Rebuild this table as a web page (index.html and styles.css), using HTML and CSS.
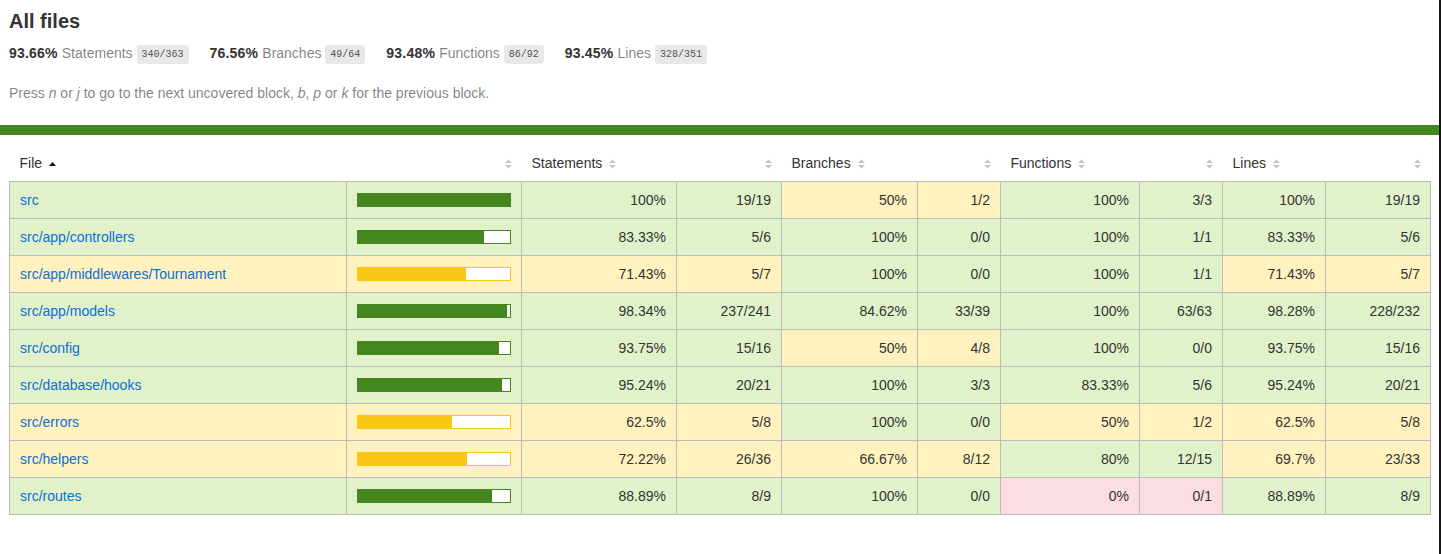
FILE: index.html
```html
<!DOCTYPE html>
<html lang="en">
<head>
<meta charset="utf-8">
<title>Code coverage report for All files</title>
<link rel="stylesheet" href="styles.css">
</head>
<body>
<div class="wrapper">
  <div class="pad1">
    <h1>All files</h1>
    <div class="clearfix">
      <div class="fl pad1y space-right2"><span class="strong">93.66% </span><span class="quiet">Statements</span> <span class="fraction">340/363</span></div>
      <div class="fl pad1y space-right2"><span class="strong">76.56% </span><span class="quiet">Branches</span> <span class="fraction">49/64</span></div>
      <div class="fl pad1y space-right2"><span class="strong">93.48% </span><span class="quiet">Functions</span> <span class="fraction">86/92</span></div>
      <div class="fl pad1y space-right2"><span class="strong">93.45% </span><span class="quiet">Lines</span> <span class="fraction">328/351</span></div>
    </div>
    <p class="quiet hint">Press <em>n</em> or <em>j</em> to go to the next uncovered block, <em>b</em>, <em>p</em> or <em>k</em> for the previous block.</p>
  </div>
  <div class="status-line high"></div>
  <div class="pad1">
    <table class="coverage-summary">
      <colgroup>
        <col class="c-file"><col class="c-pic"><col class="c-spct"><col class="c-sabs"><col class="c-bpct"><col class="c-babs"><col class="c-fpct"><col class="c-fabs"><col class="c-lpct"><col class="c-labs">
      </colgroup>
      <thead>
        <tr>
          <th class="file sorted">File<span class="sorter"><svg width="7" height="10" viewBox="0 0 7 10"><polygon points="3.5,3 7,7 0,7" fill="#111"/></svg></span></th>
          <th class="pic"><span class="sorter"><svg width="7" height="10" viewBox="0 0 7 10"><polygon points="3.5,0.5 7,4 0,4" fill="#c4c4c4"/><polygon points="0,6 7,6 3.5,9.5" fill="#c4c4c4"/></svg></span></th>
          <th class="pct">Statements<span class="sorter"><svg width="7" height="10" viewBox="0 0 7 10"><polygon points="3.5,0.5 7,4 0,4" fill="#c4c4c4"/><polygon points="0,6 7,6 3.5,9.5" fill="#c4c4c4"/></svg></span></th>
          <th class="abs"><span class="sorter"><svg width="7" height="10" viewBox="0 0 7 10"><polygon points="3.5,0.5 7,4 0,4" fill="#c4c4c4"/><polygon points="0,6 7,6 3.5,9.5" fill="#c4c4c4"/></svg></span></th>
          <th class="pct">Branches<span class="sorter"><svg width="7" height="10" viewBox="0 0 7 10"><polygon points="3.5,0.5 7,4 0,4" fill="#c4c4c4"/><polygon points="0,6 7,6 3.5,9.5" fill="#c4c4c4"/></svg></span></th>
          <th class="abs"><span class="sorter"><svg width="7" height="10" viewBox="0 0 7 10"><polygon points="3.5,0.5 7,4 0,4" fill="#c4c4c4"/><polygon points="0,6 7,6 3.5,9.5" fill="#c4c4c4"/></svg></span></th>
          <th class="pct">Functions<span class="sorter"><svg width="7" height="10" viewBox="0 0 7 10"><polygon points="3.5,0.5 7,4 0,4" fill="#c4c4c4"/><polygon points="0,6 7,6 3.5,9.5" fill="#c4c4c4"/></svg></span></th>
          <th class="abs"><span class="sorter"><svg width="7" height="10" viewBox="0 0 7 10"><polygon points="3.5,0.5 7,4 0,4" fill="#c4c4c4"/><polygon points="0,6 7,6 3.5,9.5" fill="#c4c4c4"/></svg></span></th>
          <th class="pct">Lines<span class="sorter"><svg width="7" height="10" viewBox="0 0 7 10"><polygon points="3.5,0.5 7,4 0,4" fill="#c4c4c4"/><polygon points="0,6 7,6 3.5,9.5" fill="#c4c4c4"/></svg></span></th>
          <th class="abs"><span class="sorter"><svg width="7" height="10" viewBox="0 0 7 10"><polygon points="3.5,0.5 7,4 0,4" fill="#c4c4c4"/><polygon points="0,6 7,6 3.5,9.5" fill="#c4c4c4"/></svg></span></th>
        </tr>
      </thead>
      <tbody>
        <tr>
          <td class="file high"><a href="#">src</a></td>
          <td class="pic high"><div class="chart"><div class="cover-fill cover-full" style="width: 100%"></div><div class="cover-empty" style="width: 0%"></div></div></td>
          <td class="pct high">100%</td><td class="abs high">19/19</td>
          <td class="pct medium">50%</td><td class="abs medium">1/2</td>
          <td class="pct high">100%</td><td class="abs high">3/3</td>
          <td class="pct high">100%</td><td class="abs high">19/19</td>
        </tr>
        <tr>
          <td class="file high"><a href="#">src/app/controllers</a></td>
          <td class="pic high"><div class="chart"><div class="cover-fill" style="width: 83%"></div><div class="cover-empty" style="width: 17%"></div></div></td>
          <td class="pct high">83.33%</td><td class="abs high">5/6</td>
          <td class="pct high">100%</td><td class="abs high">0/0</td>
          <td class="pct high">100%</td><td class="abs high">1/1</td>
          <td class="pct high">83.33%</td><td class="abs high">5/6</td>
        </tr>
        <tr>
          <td class="file medium"><a href="#">src/app/middlewares/Tournament</a></td>
          <td class="pic medium"><div class="chart"><div class="cover-fill" style="width: 71%"></div><div class="cover-empty" style="width: 29%"></div></div></td>
          <td class="pct medium">71.43%</td><td class="abs medium">5/7</td>
          <td class="pct high">100%</td><td class="abs high">0/0</td>
          <td class="pct high">100%</td><td class="abs high">1/1</td>
          <td class="pct medium">71.43%</td><td class="abs medium">5/7</td>
        </tr>
        <tr>
          <td class="file high"><a href="#">src/app/models</a></td>
          <td class="pic high"><div class="chart"><div class="cover-fill" style="width: 98%"></div><div class="cover-empty" style="width: 2%"></div></div></td>
          <td class="pct high">98.34%</td><td class="abs high">237/241</td>
          <td class="pct high">84.62%</td><td class="abs high">33/39</td>
          <td class="pct high">100%</td><td class="abs high">63/63</td>
          <td class="pct high">98.28%</td><td class="abs high">228/232</td>
        </tr>
        <tr>
          <td class="file high"><a href="#">src/config</a></td>
          <td class="pic high"><div class="chart"><div class="cover-fill" style="width: 93%"></div><div class="cover-empty" style="width: 7%"></div></div></td>
          <td class="pct high">93.75%</td><td class="abs high">15/16</td>
          <td class="pct medium">50%</td><td class="abs medium">4/8</td>
          <td class="pct high">100%</td><td class="abs high">0/0</td>
          <td class="pct high">93.75%</td><td class="abs high">15/16</td>
        </tr>
        <tr>
          <td class="file high"><a href="#">src/database/hooks</a></td>
          <td class="pic high"><div class="chart"><div class="cover-fill" style="width: 95%"></div><div class="cover-empty" style="width: 5%"></div></div></td>
          <td class="pct high">95.24%</td><td class="abs high">20/21</td>
          <td class="pct high">100%</td><td class="abs high">3/3</td>
          <td class="pct high">83.33%</td><td class="abs high">5/6</td>
          <td class="pct high">95.24%</td><td class="abs high">20/21</td>
        </tr>
        <tr>
          <td class="file medium"><a href="#">src/errors</a></td>
          <td class="pic medium"><div class="chart"><div class="cover-fill" style="width: 62%"></div><div class="cover-empty" style="width: 38%"></div></div></td>
          <td class="pct medium">62.5%</td><td class="abs medium">5/8</td>
          <td class="pct high">100%</td><td class="abs high">0/0</td>
          <td class="pct medium">50%</td><td class="abs medium">1/2</td>
          <td class="pct medium">62.5%</td><td class="abs medium">5/8</td>
        </tr>
        <tr>
          <td class="file medium"><a href="#">src/helpers</a></td>
          <td class="pic medium"><div class="chart"><div class="cover-fill" style="width: 72%"></div><div class="cover-empty" style="width: 28%"></div></div></td>
          <td class="pct medium">72.22%</td><td class="abs medium">26/36</td>
          <td class="pct medium">66.67%</td><td class="abs medium">8/12</td>
          <td class="pct high">80%</td><td class="abs high">12/15</td>
          <td class="pct medium">69.7%</td><td class="abs medium">23/33</td>
        </tr>
        <tr>
          <td class="file high"><a href="#">src/routes</a></td>
          <td class="pic high"><div class="chart"><div class="cover-fill" style="width: 88%"></div><div class="cover-empty" style="width: 12%"></div></div></td>
          <td class="pct high">88.89%</td><td class="abs high">8/9</td>
          <td class="pct high">100%</td><td class="abs high">0/0</td>
          <td class="pct low">0%</td><td class="abs low">0/1</td>
          <td class="pct high">88.89%</td><td class="abs high">8/9</td>
        </tr>
      </tbody>
    </table>
  </div>
</div>
</body>
</html>
```

FILE: styles.css
```css
*, *:after, *:before { box-sizing: border-box; }
html, body { margin: 0; padding: 0; }
html { background: #fff; }
body {
  font-family: "Liberation Sans", Arial, Helvetica, sans-serif;
  font-size: 14px;
  color: #333;
  min-height: 100vh;
  border-right: 2px solid #161616;
}
h1 { font-size: 20px; margin: 0 0 2px; line-height: 23px; }
a { color: #0a6fd8; text-decoration: none; }
.strong { font-weight: bold; letter-spacing: 0.2px; }
.pad1 { padding: 10px 10px 10px 9px; }
.pad1y { padding: 10px 0; }
.space-right2 { padding-right: 21px; }
.clearfix { display: flex; flex-wrap: wrap; }
.quiet { color: rgba(0, 0, 0, 0.5); }
.hint { margin: 14px 0 14px; line-height: 16px; }
.fraction {
  font-family: "Liberation Mono", Consolas, Menlo, Courier, monospace;
  font-size: 10px;
  color: #555;
  background: #e8e8e8;
  padding: 4px 5px;
  border-radius: 3px;
  vertical-align: middle;
}
.status-line { height: 10px; }
.status-line.high { background: #44871f; }

.coverage-summary {
  border-collapse: collapse;
  width: 100%;
  table-layout: fixed;
}
.c-file { width: 337px; }
.c-pic { width: 175px; }
.c-spct { width: 155px; }
.c-sabs { width: 105px; }
.c-bpct { width: 136px; }
.c-babs { width: 83px; }
.c-fpct { width: 139px; }
.c-fabs { width: 83px; }
.c-lpct { width: 103px; }
.c-labs { width: 105px; }
.coverage-summary tr { border-bottom: 1px solid #bbb; }
.coverage-summary thead tr { border-bottom: none; }
.coverage-summary td, .coverage-summary th { padding: 10px; line-height: 16px; }
.coverage-summary tbody { border: 1px solid #bbb; }
.coverage-summary td { border-right: 1px solid #bbb; }
.coverage-summary td:last-child { border-right: none; }
.coverage-summary th { text-align: left; font-weight: normal; white-space: nowrap; }
.coverage-summary th.pic, .coverage-summary th.abs,
.coverage-summary td.pct, .coverage-summary td.abs { text-align: right; }
.coverage-summary td.file { white-space: nowrap; }
.sorter {
  display: inline-block;
  width: 7px;
  height: 10px;
  margin-left: 0.5em;
  vertical-align: -1px;
  line-height: 0;
}
.sorter svg { display: block; }

.high { background: #e1f2cb; }
.medium { background: #fff2bf; }
.low { background: #fbdde2; }

.chart { display: flex; height: 14px; border: 1px solid #44871f; }
.high .chart { border-color: #44871f; }
.medium .chart { border-color: #f8c613; }
.cover-fill, .cover-empty { height: 12px; }
.high .cover-fill { background: #44871f; }
.medium .cover-fill { background: #f8c613; }
.cover-empty { background: #fff; }
```
